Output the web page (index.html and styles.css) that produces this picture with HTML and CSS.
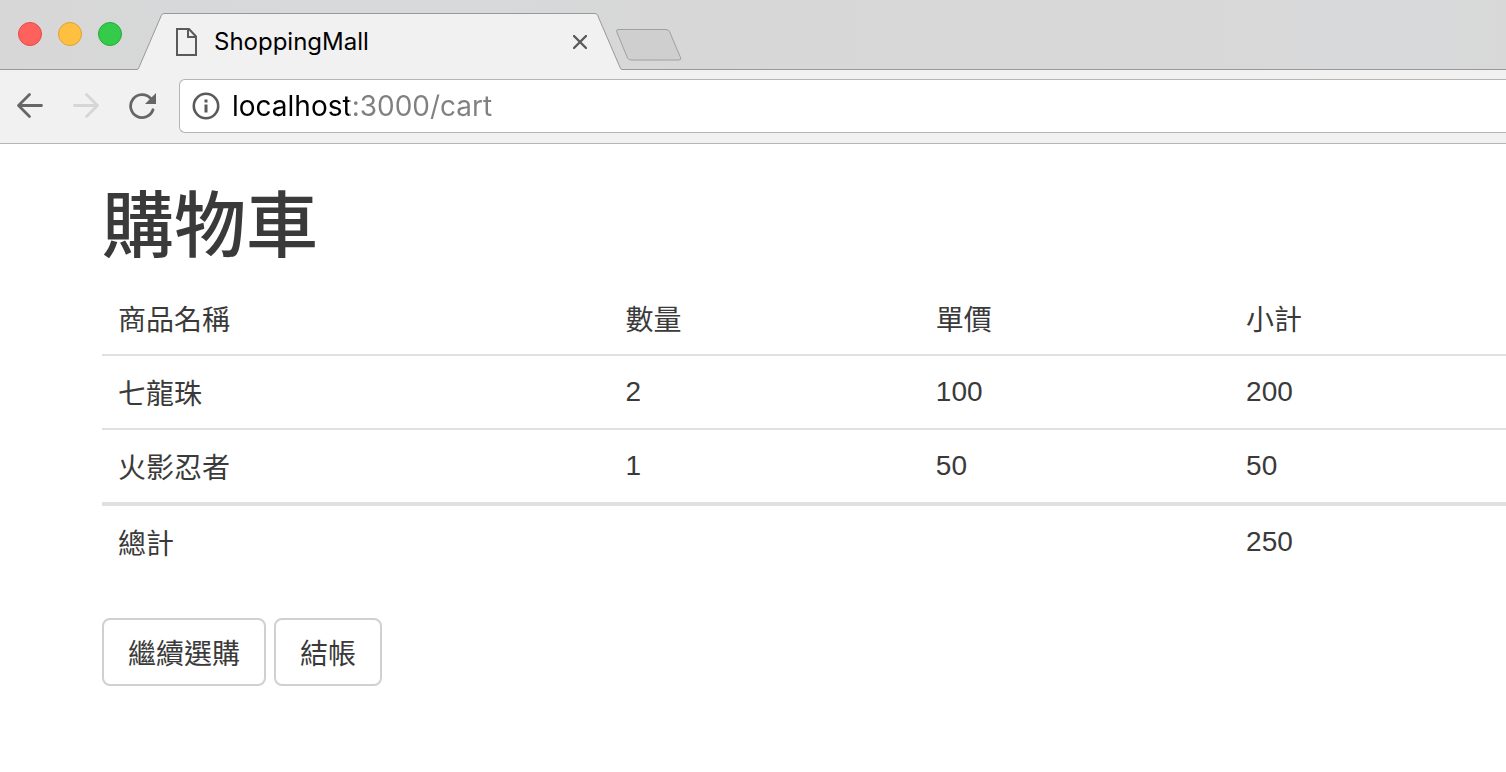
FILE: index.html
```html
<!DOCTYPE html>
<html lang="zh-Hant">
<head>
<meta charset="utf-8">
<meta name="viewport" content="width=device-width, initial-scale=1">
<title>ShoppingMall</title>
<link rel="stylesheet" href="styles.css">
</head>
<body>
<header class="browser">
  <div class="tab-strip">
    <div class="window-controls">
      <button class="light light-close" type="button" aria-label="Close window"></button>
      <button class="light light-minimize" type="button" aria-label="Minimize window"></button>
      <button class="light light-zoom" type="button" aria-label="Zoom window"></button>
    </div>
    <div class="tab">
      <svg class="tab-edge" width="27" height="57" viewBox="0 0 27 57" aria-hidden="true">
        <path d="M0 57V56.5Q1 56.5 1.8 54.8L24.3 2.5Q25.2.5 27 .5V57Z" fill="#f1f1f1"/>
        <path d="M0 56.5Q1 56.5 1.8 54.8L24.3 2.5Q25.2.5 27 .5" fill="none" stroke="#999"/>
      </svg>
      <div class="tab-body">
        <svg class="tab-page-icon" width="22" height="28" viewBox="0 0 22 28" fill="none" stroke="#5a5a5a" stroke-width="2" aria-hidden="true">
          <path d="M1 1H13L20 8.500V27H1Z"/><path d="M12 1V9H20"/>
        </svg>
        <span class="tab-title">ShoppingMall</span>
        <button class="tab-close" type="button" aria-label="Close tab">
          <svg width="14" height="14" viewBox="0 0 14 14" aria-hidden="true"><path d="M1 1L13 13M13 1L1 13" stroke="#5a5a5a" stroke-width="2.400" stroke-linecap="round"/></svg>
        </button>
      </div>
      <svg class="tab-edge" width="27" height="57" viewBox="0 0 27 57" aria-hidden="true">
        <path d="M27 57V56.5Q26 56.5 25.2 54.8L2.700 2.500Q1.800.5 0 .5V57Z" fill="#f1f1f1"/>
        <path d="M27 56.5Q26 56.5 25.2 54.8L2.700 2.500Q1.800.5 0 .5" fill="none" stroke="#999"/>
      </svg>
    </div>
    <button class="new-tab" type="button" aria-label="New tab">
      <svg width="66" height="32" viewBox="0 0 66 32" aria-hidden="true"><path d="M2 .5H50Q52.500.5 53.500 2.500L64.500 28.500Q65.500 31 63 31H15Q12.500 31 11.500 29L.8 3Q0 .5 2 .5Z" fill="#cfcfcf" stroke="#a0a0a0"/></svg>
    </button>
  </div>
  <nav class="toolbar" aria-label="Browser">
    <button class="nav-button" type="button" aria-label="Back">
      <svg width="28" height="28" viewBox="0 0 28 28" fill="none" stroke="#666" stroke-width="2.800" stroke-linecap="round" stroke-linejoin="round"><path d="M25.500 13.500H3M13.500 2.500L2.500 13.500L13.500 24.500"/></svg>
    </button>
    <button class="nav-button" type="button" aria-label="Forward" disabled>
      <svg width="28" height="28" viewBox="0 0 28 28" fill="none" stroke="#d6d6d6" stroke-width="2.800" stroke-linecap="round" stroke-linejoin="round"><path d="M2.500 13.500H25M14.500 2.500L25.500 13.500L14.500 24.500"/></svg>
    </button>
    <button class="nav-button" type="button" aria-label="Reload">
      <svg width="28" height="28" viewBox="0 0 28 28"><path d="M25 17.800A11.500 11.500 0 1 1 22.500 6.200" fill="none" stroke="#666" stroke-width="2.800" stroke-linecap="round"/><path d="M28 1V12H17Z" fill="#666"/></svg>
    </button>
    <label class="address">
      <svg width="28" height="28" viewBox="0 0 28 28" aria-hidden="true"><circle cx="14" cy="14" r="12.200" fill="none" stroke="#5a5a5a" stroke-width="2.600"/><path d="M12.500 7.500H15.500V10.500H12.500ZM12.500 12.500H15.500V20.500H12.500Z" fill="#5a5a5a"/></svg>
      <input class="address-input" type="text" aria-label="Address" value="localhost:3000/cart" spellcheck="false">
    </label>
  </nav>
</header>
<main class="page">
  <h1 class="page-title">購物車</h1>
  <table class="cart">
    <colgroup><col class="col-name"><col class="col-number"><col class="col-number"><col></colgroup>
    <thead><tr><th scope="col">商品名稱</th><th scope="col">數量</th><th scope="col">單價</th><th scope="col">小計</th></tr></thead>
    <tbody>
      <tr><td>七龍珠</td><td class="number">2</td><td class="number">100</td><td class="number">200</td></tr>
      <tr><td>火影忍者</td><td class="number">1</td><td class="number">50</td><td class="number">50</td></tr>
    </tbody>
    <tfoot><tr><td>總計</td><td></td><td></td><td class="number">250</td></tr></tfoot>
  </table>
  <div class="actions">
    <button class="button" type="button">繼續選購</button>
    <button class="button" type="button">結帳</button>
  </div>
</main>
</body>
</html>
```
FILE: styles.css
```css
* {
  box-sizing: border-box;
}

body {
  margin: 0;
  background: #fff;
  color: #3a3a3a;
  font-family: "Noto Sans CJK TC", sans-serif;
  font-size: 28px;
  line-height: 40px;
}

button {
  margin: 0;
  padding: 0;
  border: 0;
  background: none;
  color: inherit;
  font: inherit;
}

svg {
  display: block;
  flex: none;
}

.browser {
  font-family: Inter, "Noto Sans CJK TC", sans-serif;
}

.tab-strip {
  display: flex;
  align-items: flex-end;
  height: 70px;
  background: linear-gradient(90deg, #d7d7d7, #d7d9db 28%, #d7d7d7 45%, #d9d8d8 80%, #d7d9db 92%, #d8d8d8);
  box-shadow: inset 0 -1px #999;
}

.window-controls {
  display: flex;
  gap: 16px;
  padding: 0 15px 24px 18px;
}

.light {
  width: 24px;
  height: 24px;
  border: 1px solid;
  border-radius: 50%;
}

.light-close {
  background: #ff625c;
  border-color: #e34b46;
}

.light-minimize {
  background: #ffc041;
  border-color: #dfa032;
}

.light-zoom {
  background: #34cb4b;
  border-color: #27aa35;
}

.tab {
  display: flex;
  width: 485px;
}

.tab-body {
  display: flex;
  flex: 1;
  align-items: center;
  min-width: 0;
  padding: 0 8px 0 12px;
  border-top: 1px solid #999;
  background: #f1f1f1;
}

.tab-title {
  flex: 1;
  margin-left: 16px;
  color: #000;
  font-size: 24px;
}

.new-tab {
  margin: 0 0 9px -6px;
}

.toolbar {
  display: flex;
  align-items: center;
  gap: 28px;
  padding: 9px 0 10px 16px;
  border-bottom: 1px solid #b4b4b4;
  background: #f1f1f1;
}

.address {
  display: flex;
  flex: 1;
  align-items: center;
  gap: 12px;
  height: 54px;
  margin-left: -5px;
  padding-left: 12px;
  border: 1px solid #b4b4b4;
  border-right: 0;
  border-radius: 6px 0 0 6px;
  background: #fff;
}

.address-input {
  flex: 1;
  min-width: 0;
  padding: 0;
  border: 0;
  outline: 0;
  background: linear-gradient(90deg, #000 117px, #808080 117px);
  background-clip: text;
  -webkit-background-clip: text;
  color: transparent;
  caret-color: #000;
  font: 28px/40px Inter, sans-serif;
}

.page {
  padding: 40px 0 40px 102px;
}

.page-title {
  margin: 0 0 26px;
  font-size: 72px;
  font-weight: 500;
  line-height: 72px;
}

.cart {
  width: 100%;
  margin-bottom: 40px;
  border-collapse: separate;
  border-spacing: 0;
  table-layout: fixed;
}

.col-name {
  width: 36.15%;
}

.col-number {
  width: 22.1%;
}

.cart th,
.cart td {
  padding: 16px;
  font-weight: 400;
  text-align: left;
}

.cart .number {
  font-family: "Liberation Sans", sans-serif;
}

.cart tbody td {
  border-top: 2px solid #e0e0e0;
}

.cart tfoot td {
  border-top: 4px solid #e0e0e0;
}

.actions {
  display: flex;
  gap: 8px;
}

.button {
  padding: 12px 24px;
  border: 2px solid #d0d0d0;
  border-radius: 8px;
  background: #fff;
}
```
